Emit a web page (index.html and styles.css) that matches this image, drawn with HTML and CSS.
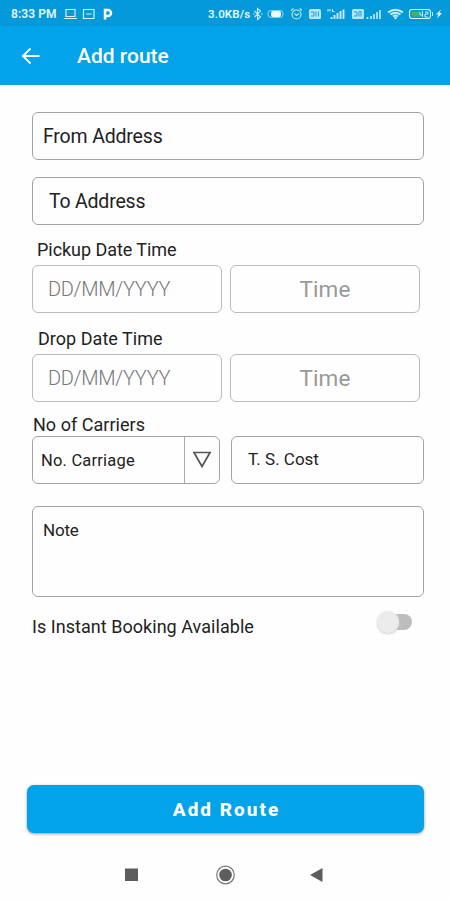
FILE: index.html
```html
<!DOCTYPE html>
<html lang="en">
<head>
<meta charset="utf-8">
<title>Add route</title>
<link rel="stylesheet" href="styles.css">
</head>
<body>
<div class="screen">
  <div class="status">
    <span class="clock">8:33 PM</span>
    <svg class="status-left" width="52" height="14" viewBox="0 0 52 14" fill="none" stroke="#d3f1ff" stroke-width="1.2">
      <path d="M3 2.5h9v7H3zM1 11.5h13"/>
      <path d="M20.500 2.500h10.500v9h-10.500zM23 7h5.500"/>
      <path d="M42 12.500V3h3a2.500 2.500 0 0 1 0 6h-3" stroke="#fff" stroke-width="2.500"/>
    </svg>
    <span class="speed">3.0KB/s</span>
    <svg class="status-right" width="192" height="14" viewBox="0 0 192 14" fill="none" stroke="#c9edff" stroke-width="1.100">
      <path d="M3.500 4l6 6-3 2.500V1.500l3 2.500-6 6M2 7h1.500M10 7h1.500"/>
      <rect x="17" y="3.500" width="15" height="7" rx="3.500" stroke="#7fd0f3"/>
      <rect x="20" y="4" width="10" height="6" rx="2" fill="#eafaff" stroke="none"/>
      <circle cx="45.500" cy="7.500" r="4.500"/><path d="M40 3.500l2.500-2M51 3.500l-2.500-2M43.500 6.500l2 2 2.500-2"/>
      <rect x="58" y="2" width="12" height="10" rx="1.500" fill="#b5e6fc" stroke="none"/>
      <path d="M60 5h3v4h-3M65 4.500v5M67.500 4.500v5" stroke="#079bd9" stroke-width=".9"/>
      <path d="M80.500 12v-2M83.500 12V8M86.500 12V6M89.500 12V4M92.500 12V2.500" stroke-width="1.900"/>
      <path d="M77 4.500V2M79 4.500V2M81.500 2v2.500h2"/>
      <rect x="101" y="2" width="12" height="10" rx="1.500" fill="#b5e6fc" stroke="none"/>
      <path d="M103 5h3v4h-3M108 9.500v-5h2v5" stroke="#079bd9" stroke-width=".9"/>
      <path d="M116.500 12v-2M120 12V9M123 12V7M126 12V5M129 12V3" stroke-width="1.600"/>
      <path d="M137 5.500q7.500-5.500 15 0M139.500 7.500q5-3.500 10 0M142 9.500q2.500-2 5 0" stroke-width="1.900"/><circle cx="144.500" cy="11" r="1.300" fill="#c9edff" stroke="none"/>
      <rect x="158.500" y="2.500" width="21" height="9" rx="2.500" stroke="#e1f7ff"/>
      <path d="M160.500 4.500h8v5h-8z" fill="#38ba59" stroke="none"/>
      <path d="M169 5v3h3M171.500 4v6M174 5h3v2h-3v3h3M181.500 5v4" stroke-width="1"/>
      <path d="M190 2.500l-5 5h2.500l-1.500 4 5-5.500h-2.500z" fill="#eefbff" stroke="none"/>
    </svg>
  </div>
  <header class="appbar">
    <svg width="20" height="18" viewBox="0 0 20 18" fill="none" stroke="#fff" stroke-width="1.900"><path d="M18.500 9H2M9.500 1.500L2 9l7.500 7.500"/></svg>
    <h1 class="title">Add route</h1>
  </header>
  <main class="form">
    <div class="field from">From Address</div>
    <div class="field to">To Address</div>
    <div class="label pickup">Pickup Date Time</div>
    <div class="row">
      <div class="field date">DD/MM/YYYY</div>
      <div class="field time">Time</div>
    </div>
    <div class="label drop">Drop Date Time</div>
    <div class="row">
      <div class="field date">DD/MM/YYYY</div>
      <div class="field time">Time</div>
    </div>
    <div class="label carriers">No of Carriers</div>
    <div class="row cargo">
      <div class="field select">
        <span class="select-text">No. Carriage</span>
        <span class="select-arrow"><svg width="20" height="18" viewBox="0 0 20 18" fill="none" stroke="#555" stroke-width="1.700"><path d="M2 1.500h16l-8 14z"/></svg></span>
      </div>
      <div class="field cost">T. S. Cost</div>
    </div>
    <div class="field note">Note</div>
    <div class="instant">
      <span class="instant-text">Is Instant Booking Available</span>
      <span class="switch"><span class="thumb"></span></span>
    </div>
  </main>
  <div class="submit">Add Route</div>
  <nav class="nav">
    <svg width="450" height="50" viewBox="0 0 450 50" fill="#5d5d5d"><path d="M125 18.500h13v12.500h-13z"/><circle cx="225.500" cy="25" r="8.800" fill="none" stroke="#777" stroke-width="1.200"/><circle cx="225.500" cy="25" r="6.300"/><path d="M310 25l12.500-7v14z"/></svg>
  </nav>
</div>
</body>
</html>
```
FILE: styles.css
```css
* { box-sizing: border-box; }
body { margin: 0; background: #fefefe; font-family: Roboto, sans-serif; color: #222; }
.screen { width: 450px; height: 900px; display: flex; flex-direction: column; overflow: hidden; }
.status { height: 26px; background: #0499d8; display: flex; align-items: center; padding: 1px 0 0 11px; color: #e5f7ff; font-weight: 600; white-space: nowrap; flex: none; }
.clock { width: 52px; font-size: 12px; letter-spacing: .1px; }
.status-left { margin-right: 93px; flex: none; }
.speed { width: 43px; font-size: 11.5px; letter-spacing: .15px; }
.status-right { flex: none; }
.appbar { height: 59px; background: #02a3e9; display: flex; align-items: center; padding: 1px 0 0 21px; gap: 36px; flex: none; }
.title { margin: 0; color: #fff; font-size: 21px; font-weight: 500; line-height: 28px; }
.form { margin-left: 32px; width: 392px; height: 700px; padding-top: 27px; }
.field { height: 48px; border: 1px solid #a3a3a3; border-radius: 6px; display: flex; align-items: center; white-space: nowrap; }
.from { padding-left: 10px; font-size: 19.500px; letter-spacing: -.17px; }
.to { margin-top: 17px; padding-left: 16px; font-size: 19.500px; letter-spacing: -.2px; }
.label { height: 22px; line-height: 22px; font-size: 18px; white-space: nowrap; }
.pickup { margin: 14px 0 4px 5px; letter-spacing: -.05px; }
.drop { margin: 15px 0 4px 6px; letter-spacing: .03px; }
.carriers { margin: 12px 0 0 1px; letter-spacing: .03px; }
.row { display: flex; gap: 8px; }
.date { width: 190px; padding-left: 15px; font-size: 20px; letter-spacing: -.3px; font-weight: 300; color: #777; border-color: #bbb; }
.time { width: 190px; justify-content: center; font-size: 22.500px; letter-spacing: .15px; color: #999; border-color: #bbb; }
.cargo { gap: 11px; }
.select { width: 188px; }
.select-text { width: 151px; padding-left: 8px; font-size: 16.500px; letter-spacing: .2px; }
.select-arrow { height: 46px; width: 35px; border-left: 1px solid #aaa; display: flex; align-items: center; justify-content: center; }
.cost { width: 193px; padding: 0 0 2px 16px; font-size: 17px; }
.note { height: 91px; margin-top: 22px; padding: 12px 10px; align-items: flex-start; font-size: 17px; letter-spacing: -.2px; line-height: 22px; }
.instant { height: 50px; display: flex; justify-content: space-between; padding: 12px 12px 0 0; }
.instant-text { font-size: 18px; line-height: 36px; letter-spacing: .04px; white-space: nowrap; }
.switch { width: 34px; height: 16px; margin-top: 5px; border-radius: 8px; background: #bdbdbd; display: flex; align-items: center; }
.thumb { width: 22px; height: 22px; margin-left: -1px; border-radius: 50%; background: #ececec; box-shadow: 0 1px 2px #ccc; flex: none; }
.submit { width: 397px; height: 48px; margin-left: 27px; padding-left: 2px; border-radius: 7px; background: #02a3e9; box-shadow: 0 1px 3px #999; color: #fff; font-weight: 800; font-size: 19px; letter-spacing: 2px; line-height: 49px; text-align: center; flex: none; }
.nav { margin-top: 17px; height: 50px; flex: none; }
```
